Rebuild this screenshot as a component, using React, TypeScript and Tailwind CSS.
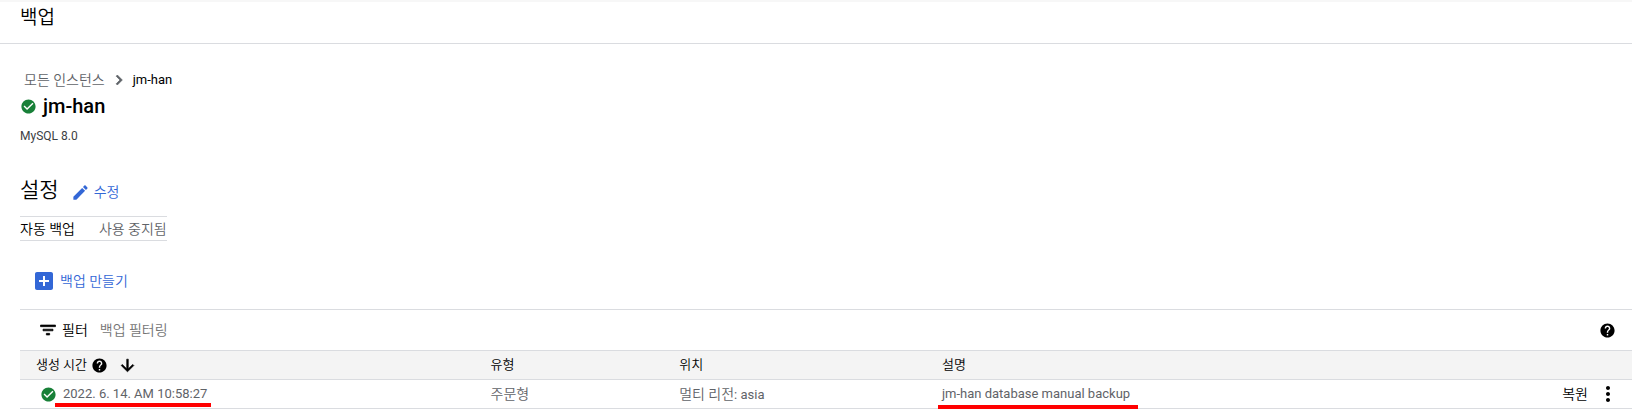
import React from "react";

const PATHS = {
  check:
    "M12 2C6.48 2 2 6.48 2 12s4.48 10 10 10 10-4.48 10-10S17.52 2 12 2zm-2 15l-5-5 1.41-1.41L10 14.17l7.59-7.59L19 8l-9 9z",
  chevron: "M10 6L8.59 7.41 13.17 12l-4.58 4.59L10 18l6-6z",
  edit: "M3 17.25V21h3.75L17.81 9.94l-3.75-3.75L3 17.25zM20.71 7.04c.39-.39.39-1.02 0-1.41l-2.34-2.34c-.39-.39-1.02-.39-1.41 0l-1.83 1.83 3.75 3.75 1.83-1.83z",
  addBox:
    "M19 3H5c-1.11 0-2 .9-2 2v14c0 1.1.89 2 2 2h14c1.1 0 2-.9 2-2V5c0-1.1-.9-2-2-2zm-2 10h-4v4h-2v-4H7v-2h4V7h2v4h4v2z",
  filter: "M10 18h4v-2h-4v2zM3 6v2h18V6H3zm3 7h12v-2H6v2z",
  help: "M12 2C6.48 2 2 6.48 2 12s4.48 10 10 10 10-4.48 10-10S17.52 2 12 2zm1 17h-2v-2h2v2zm2.07-7.75l-.9.92C13.45 12.9 13 13.5 13 15h-2v-.5c0-1.1.45-2.1 1.17-2.83l1.24-1.26c.37-.36.59-.86.59-1.41 0-1.1-.9-2-2-2s-2 .9-2 2H8c0-2.21 1.79-4 4-4s4 1.79 4 4c0 .88-.36 1.68-.93 2.25z",
  arrowDown: "M20 12l-1.41-1.41L13 16.17V4h-2v12.17l-5.58-5.59L4 12l8 8 8-8z",
  more: "M12 8c1.1 0 2-.9 2-2s-.9-2-2-2-2 .9-2 2 .9 2 2 2zm0 2c-1.1 0-2 .9-2 2s.9 2 2 2 2-.9 2-2-.9-2-2-2zm0 6c-1.1 0-2 .9-2 2s.9 2 2 2 2-.9 2-2-.9-2-2-2z",
};

function Icon({
  name,
  className,
  bold = false,
}: {
  name: keyof typeof PATHS;
  className: string;
  bold?: boolean;
}) {
  return (
    <svg
      viewBox="0 0 24 24"
      fill="currentColor"
      stroke={bold ? "currentColor" : "none"}
      strokeWidth={bold ? 0.8 : 0}
      aria-hidden="true"
      className={`shrink-0 ${className}`}
    >
      <path d={PATHS[name]} />
    </svg>
  );
}

export default function App() {
  return (
    <div className="border-t-2 border-[#f7f7f7] bg-white font-['Roboto','Noto_Sans_CJK_KR',sans-serif] text-sm text-black">
      <header className="flex h-[42px] items-start border-b border-[#dadce0] pl-5">
        <h1 className="text-[19px] leading-8 font-[350]">백업</h1>
      </header>

      <main className="pl-5">
        <nav aria-label="탐색경로" className="mt-6 flex h-6 items-center pl-1">
          <a href="#instances" className="font-[350] text-[#5f6368]">
            모든 인스턴스
          </a>
          <Icon name="chevron" bold className="ml-1 size-5 text-[#5f6368]" />
          <span className="ml-1 text-[13px]">jm-han</span>
        </nav>

        <div className="flex h-7 items-center gap-1.5">
          <Icon name="check" className="size-[17px] text-[#188038]" />
          <h2 className="text-xl font-medium">jm-han</h2>
        </div>
        <p className="mt-1 text-xs leading-6 text-[#3c4043]">MySQL 8.0</p>

        <section className="mt-6">
          <div className="flex h-9 items-center gap-3">
            <h2 className="text-[21px] font-[350]">설정</h2>
            <button type="button" className="flex items-center gap-1 pt-1 font-[350] text-[#3367d6]">
              <Icon name="edit" className="size-[19px]" />
              수정
            </button>
          </div>
          <dl className="mt-2 inline-flex h-[25px] items-center gap-6 border-y border-[#dadce0] align-top">
            <dt className="font-[350]">자동 백업</dt>
            <dd className="font-[350] text-[#5f6368]">사용 중지됨</dd>
          </dl>
        </section>

        <button
          type="button"
          className="mt-7 ml-3 flex h-6 items-center gap-1 font-[350] text-[#3367d6]"
        >
          <Icon name="addBox" className="size-6" />
          백업 만들기
        </button>

        <section className="mt-4 border-t border-[#dadce0]">
          <div className="flex h-10 items-center pr-4 pl-[18px]">
            <label htmlFor="backup-filter" className="flex items-center gap-1 font-[350]">
              <Icon name="filter" bold className="size-5" />
              필터
            </label>
            <input
              id="backup-filter"
              type="text"
              placeholder="백업 필터링"
              className="ml-3 min-w-0 flex-1 font-[350] outline-none placeholder:text-[#757575]"
            />
            <button type="button" aria-label="도움말">
              <Icon name="help" className="size-[17px]" />
            </button>
          </div>

          <table className="w-full table-fixed border-collapse text-left">
            <colgroup>
              <col className="w-[28.2%]" />
              <col className="w-[11.7%]" />
              <col className="w-[16.3%]" />
              <col />
              <col className="w-24" />
            </colgroup>
            <thead>
              <tr className="h-[29px] border-y border-[#dadce0] bg-[#f4f4f4] text-[13px]">
                <th scope="col" className="py-0 pl-4 font-[350]">
                  <div className="flex items-center">
                    생성 시간
                    <button type="button" aria-label="생성 시간 도움말" className="ml-1">
                      <Icon name="help" className="size-[17px]" />
                    </button>
                    <button type="button" aria-label="내림차순 정렬" className="ml-2.5">
                      <Icon name="arrowDown" bold className="size-[19px]" />
                    </button>
                  </div>
                </th>
                <th scope="col" className="py-0 pl-4 font-[350]">유형</th>
                <th scope="col" className="py-0 pl-4 font-[350]">위치</th>
                <th scope="col" className="py-0 pl-4 font-[350]">설명</th>
                <td />
              </tr>
            </thead>
            <tbody>
              <tr className="h-[29px] border-b border-[#dadce0] text-[#5f6368]">
                <td className="py-0 pl-5">
                  <div className="flex items-center gap-1.5">
                    <Icon name="check" className="size-[17px] text-[#188038]" />
                    <span className="relative text-[13px]">
                      2022. 6. 14. AM 10:58:27
                      <span className="absolute -right-1 -bottom-1 -left-2 h-1 bg-[#ff0000]" />
                    </span>
                  </div>
                </td>
                <td className="py-0 pl-4 font-[350]">주문형</td>
                <td className="py-0 pl-4 font-[350]">
                  멀티 리전<span className="text-[13px] font-normal">: asia</span>
                </td>
                <td className="py-0 pl-4 text-[13px]">
                  <span className="relative">
                    jm-han database manual backup
                    <span className="absolute -right-2 -bottom-2 -left-1 h-1 bg-[#ff0000]" />
                  </span>
                </td>
                <td className="py-0 pr-3">
                  <div className="flex h-6 items-center justify-end gap-2 text-black">
                    <button type="button" className="font-[350]">복원</button>
                    <button type="button" aria-label="추가 작업">
                      <Icon name="more" className="size-6" />
                    </button>
                  </div>
                </td>
              </tr>
            </tbody>
          </table>
        </section>
      </main>
    </div>
  );
}
